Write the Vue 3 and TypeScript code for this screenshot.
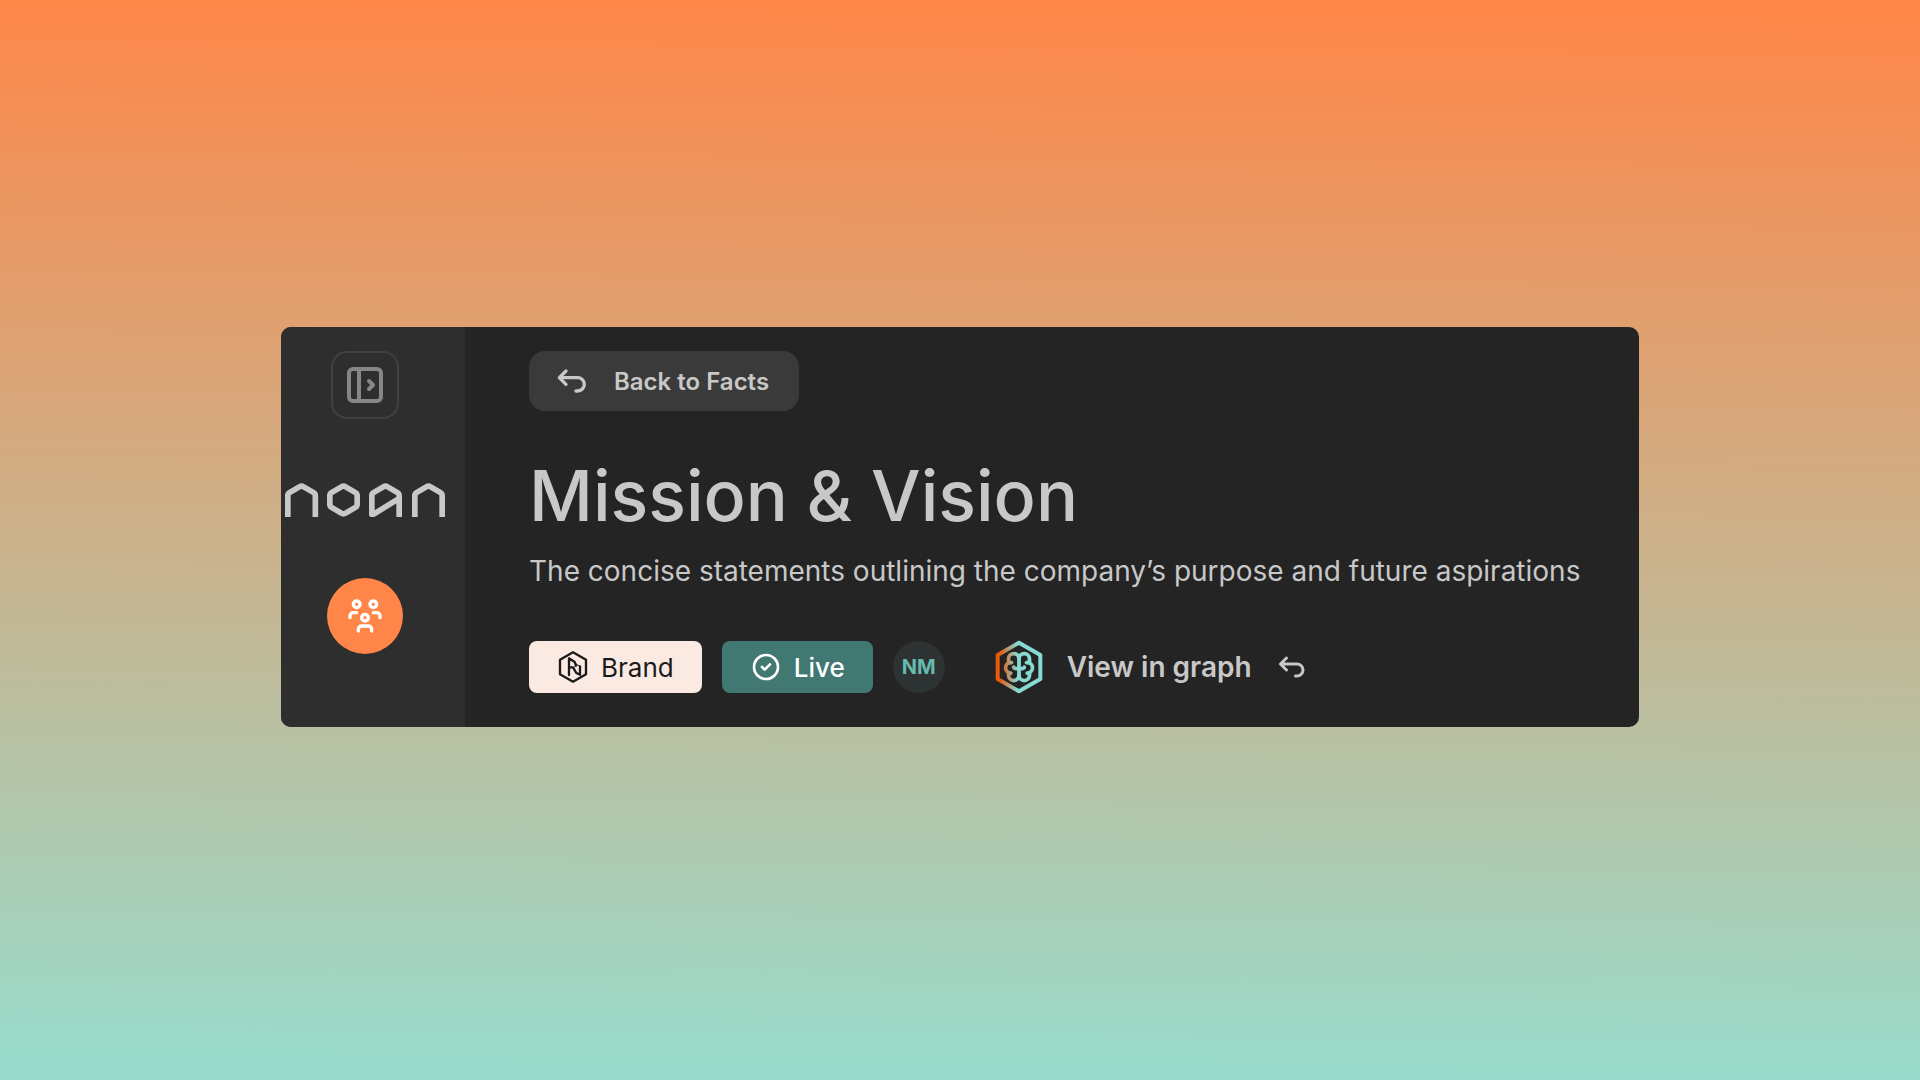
<script setup lang="ts">
interface Tag {
  label: string
  kind: 'brand' | 'live'
}

const tags: Tag[] = [
  { label: 'Brand', kind: 'brand' },
  { label: 'Live', kind: 'live' },
]
</script>

<template>
  <main class="page">
    <section class="card">
      <aside class="sidebar">
        <button class="toggle" type="button" aria-label="Expand sidebar">
          <svg class="stroke" width="48" height="48" viewBox="0 0 24 24">
            <rect x="4" y="4" width="16" height="16" rx="2" />
            <path d="M9 4v16M14 10l2 2l-2 2" />
          </svg>
        </button>

        <svg class="logo" width="160" height="34" viewBox="45 489 480 102" role="img" aria-label="noan">
          <path d="M53.500 591V527q0-6 5-9L88 500.500q6.500-4 13 0L131 518q5 3 5 9V591" />
          <path d="M179.500 527q0-6 5-9L214 500.500q6.500-4 13 0L256.500 518q5 3 5 9V553q0 6-5 9L227 579.500q-6.500 4-13 0L184.500 562q-5-3-5-9Z" />
          <path d="M387.500 591V527q0-6-5-9L353 500.500q-6.500-4-13 0L310.500 518q-5 3-5 9V582.500H311L387.500 535" />
          <path d="M434.500 591V527q0-6 5-9L469 500.500q6.500-4 13 0L511.500 518q5 3 5 9V591" />
        </svg>

        <button class="team" type="button" aria-label="Team">
          <svg class="stroke" width="40" height="40" viewBox="0 0 24 24">
            <path d="M10 13a2 2 0 1 0 4 0a2 2 0 0 0 -4 0" />
            <path d="M8 21v-1a2 2 0 0 1 2 -2h4a2 2 0 0 1 2 2v1" />
            <path d="M15 5a2 2 0 1 0 4 0a2 2 0 0 0 -4 0" />
            <path d="M17 10h2a2 2 0 0 1 2 2v1" />
            <path d="M5 5a2 2 0 1 0 4 0a2 2 0 0 0 -4 0" />
            <path d="M3 13v-1a2 2 0 0 1 2 -2h2" />
          </svg>
        </button>
      </aside>

      <div class="content">
        <button class="back" type="button">
          <svg class="stroke" width="40" height="40" viewBox="0 0 24 24">
            <path d="M9 14l-4 -4l4 -4M5 10h11a4 4 0 1 1 0 8h-1" />
          </svg>
          Back to Facts
        </button>

        <h1>Mission &amp; Vision</h1>
        <p class="summary">The concise statements outlining the company’s purpose and future aspirations</p>

        <div class="meta">
          <span v-for="tag in tags" :key="tag.kind" class="tag" :class="tag.kind">
            <svg v-if="tag.kind === 'brand'" class="stroke" width="32" height="32" viewBox="0 0 96 96">
              <path stroke-width="7" d="M48 4L87 26V70L48 92L9 70V26Z" />
              <path stroke-width="7" d="M36 72V22L53 33L57 44M37 49H48L58 66L69 71V46" />
              <path stroke-width="3" d="M55 38L69 46M57 44L50 50" />
            </svg>
            <svg v-else class="stroke" width="32" height="32" viewBox="0 0 24 24">
              <circle cx="12" cy="12" r="9" />
              <path d="M9 12l2 2l4 -4" />
            </svg>
            {{ tag.label }}
          </span>
          <span class="avatar">NM</span>
          <a class="graph" href="#graph">
            <svg class="stroke brain" width="48" height="54" viewBox="0 0 144 162">
              <defs>
                <linearGradient id="frame-tint" gradientUnits="userSpaceOnUse" x1="14" y1="0" x2="66" y2="0">
                  <stop offset="0" stop-color="#e8590c" />
                  <stop offset="1" stop-color="#86dad1" />
                </linearGradient>
                <linearGradient id="brain-tint" gradientUnits="userSpaceOnUse" x1="0" y1="0" x2="11" y2="0">
                  <stop offset="0" stop-color="#e8590c" />
                  <stop offset="1" stop-color="#86dad1" />
                </linearGradient>
              </defs>
              <path stroke="url(#frame-tint)" stroke-width="12" d="M72 8L136 45V117L72 154L8 117V45Z" />
              <g stroke="url(#brain-tint)" stroke-width="2.500" transform="translate(18 27) scale(4.5)">
                <path d="M12 17.500a3.500 3.500 0 0 1 -7 0v-1.800" />
                <path d="M12 17.500a3.500 3.500 0 0 0 7 0v-1.800" />
                <path d="M17.500 16a3.500 3.500 0 0 0 0 -7h-.5M19 9.300v-2.800a3.500 3.500 0 0 0 -7 0" />
                <path d="M6.500 16a3.500 3.500 0 0 1 0 -7h.5M5 9.300v-2.800a3.500 3.500 0 0 1 7 0v11" />
                <path d="M8.500 12a2 1 0 0 0 2 1h3a2 1 0 0 0 2 -1" />
              </g>
            </svg>
            <span>View in graph</span>
            <svg class="stroke" width="36" height="36" viewBox="0 0 24 24">
              <path d="M9 14l-4 -4l4 -4M5 10h11a4 4 0 1 1 0 8h-1" />
            </svg>
          </a>
        </div>
      </div>
    </section>
  </main>
</template>

<style>
body {
  margin: 0;
}
</style>

<style scoped>
.page {
  box-sizing: border-box;
  min-height: 100vh;
  padding: 24px 24px 50px;
  display: flex;
  align-items: center;
  justify-content: center;
  background: linear-gradient(180.5deg, #ff8648 1%, #99dbcb 98%);
  font-family: Inter, "Liberation Sans", sans-serif;
  color: #c8c8c8;
}

.card {
  width: 100%;
  max-width: 1358px;
  display: flex;
  border-radius: 10px;
  overflow: hidden;
  background: #242424;
}

.sidebar {
  box-sizing: border-box;
  flex: 0 0 184px;
  padding: 24px 16px 24px 0;
  display: flex;
  flex-direction: column;
  align-items: center;
  background: #2e2e2e;
}

button {
  margin: 0;
  padding: 0;
  border: 0;
  font: inherit;
  color: inherit;
  cursor: pointer;
}

svg {
  display: block;
  flex: none;
}

.stroke {
  fill: none;
  stroke: currentColor;
  stroke-width: 2;
  stroke-linecap: round;
  stroke-linejoin: round;
}

.toggle {
  box-sizing: border-box;
  width: 68px;
  height: 68px;
  display: grid;
  place-items: center;
  border: 2px solid #414141;
  border-radius: 16px;
  background: transparent;
  color: #868686;
}

.logo {
  margin-top: 64px;
  fill: none;
  stroke: #c8c8c8;
  stroke-width: 17;
  stroke-linejoin: round;
}

.team {
  width: 76px;
  height: 76px;
  margin-top: 61px;
  display: grid;
  place-items: center;
  border-radius: 50%;
  background: #ff8648;
  color: #fff;
}

.content {
  flex: 1;
  min-width: 0;
  padding: 24px 48px 33px 64px;
  display: flex;
  flex-direction: column;
  align-items: flex-start;
}

.back {
  height: 60px;
  padding: 0 30px 0 22px;
  display: flex;
  align-items: center;
  gap: 23px;
  border-radius: 16px;
  background: #3a3a3a;
  font-size: 24px;
  font-weight: 600;
}

h1 {
  margin: 41px 0 0;
  font-size: 70px;
  line-height: 88px;
  font-weight: 500;
}

.summary {
  margin: 11px 0 0;
  font-size: 28px;
  line-height: 40px;
}

.meta {
  margin-top: 49px;
  display: flex;
  align-items: center;
  gap: 20px;
}

.tag {
  height: 52px;
  padding: 0 28px;
  display: flex;
  align-items: center;
  gap: 12px;
  border-radius: 8px;
  font-size: 26px;
}

.brand {
  background: #fbeae2;
  color: #1a1a1a;
}

.live {
  background: #417972;
  color: #fff;
  font-weight: 500;
}

.avatar {
  width: 52px;
  height: 52px;
  display: grid;
  place-items: center;
  border-radius: 50%;
  background: #2d3332;
  color: #68b9ae;
  font-size: 20px;
  font-weight: 700;
}

.graph {
  margin-left: 30px;
  display: flex;
  align-items: center;
  gap: 21px;
  color: inherit;
  font-size: 28px;
  font-weight: 600;
  text-decoration: none;
}

.brain {
  margin-right: 3px;
}
</style>
